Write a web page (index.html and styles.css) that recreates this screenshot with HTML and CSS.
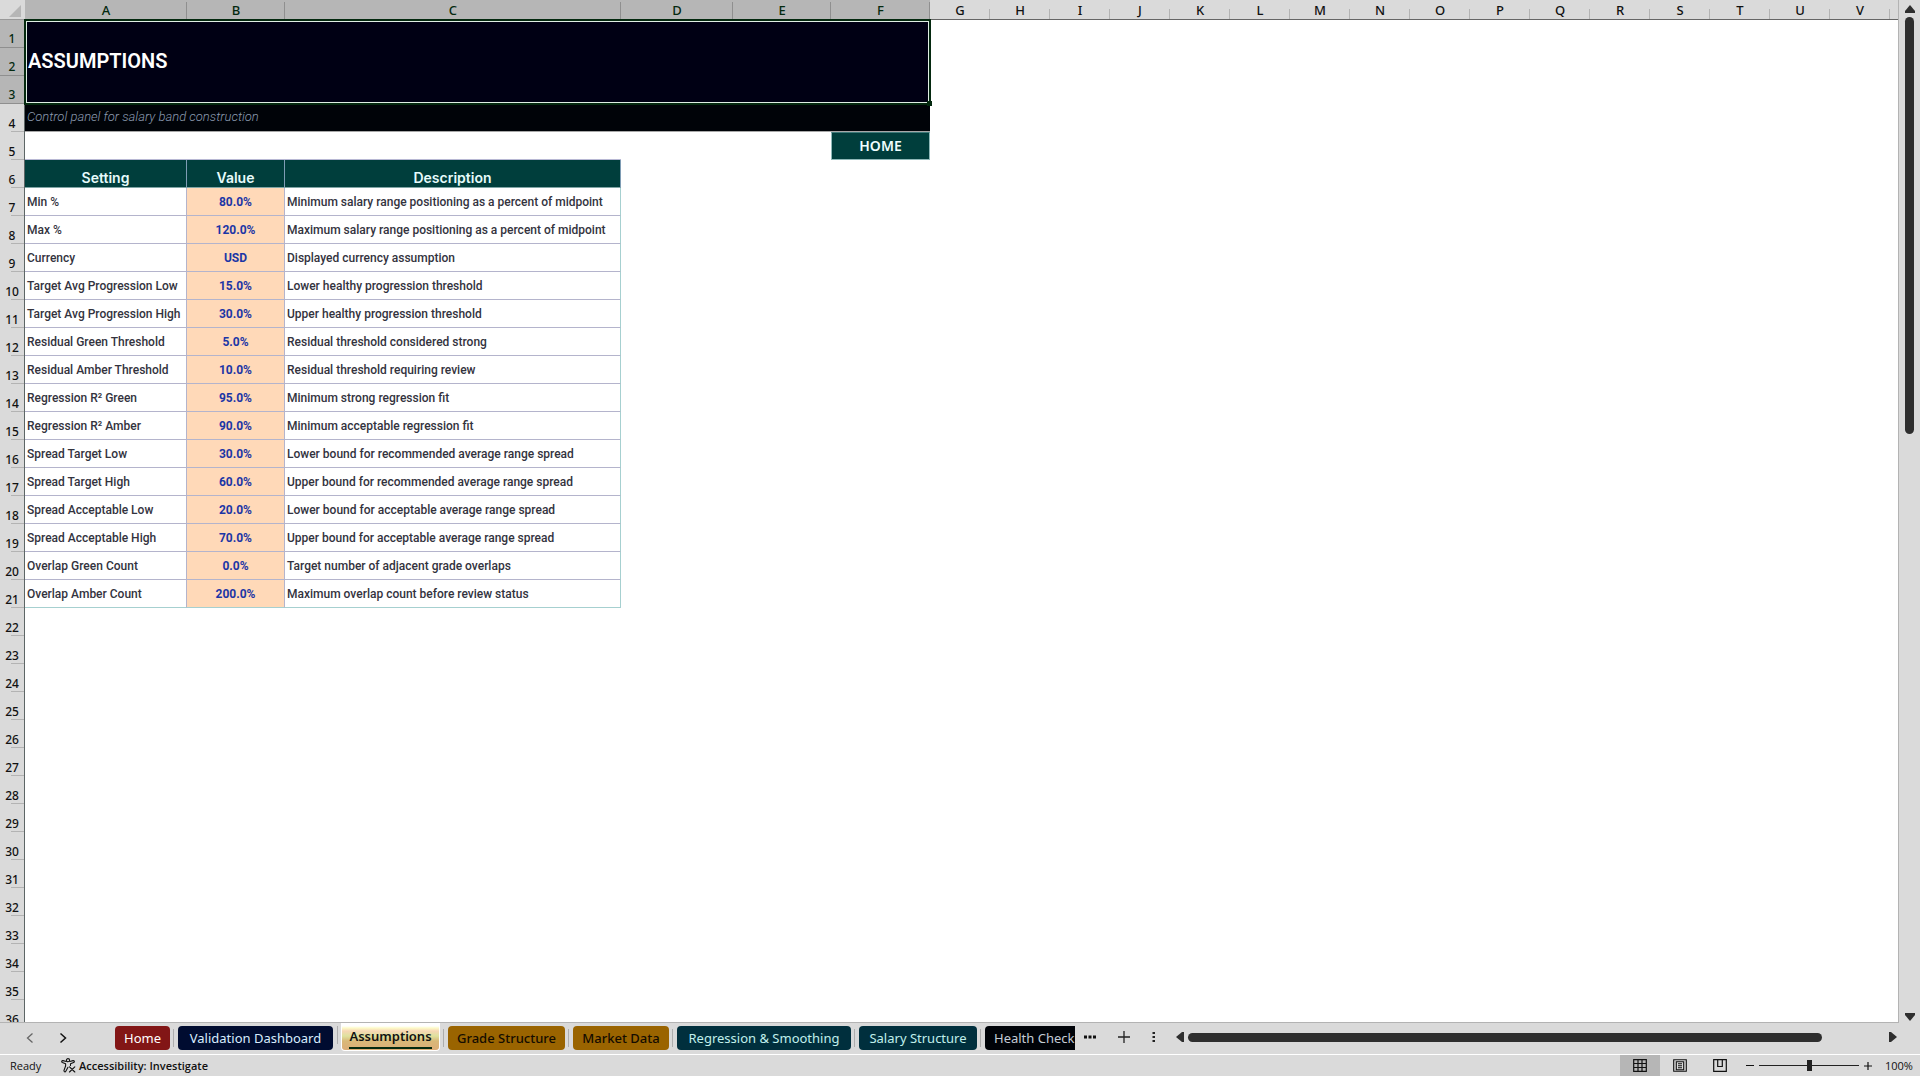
FILE: index.html
```html
<!DOCTYPE html>
<html lang="en">
<head>
<meta charset="utf-8">
<title>Assumptions</title>
<link rel="stylesheet" href="styles.css">
</head>
<body>
<main class="workspace">
  <div class="sheet">
    <table class="grid">
      <colgroup>
        <col class="w-head"><col class="w-a"><col class="w-b"><col class="w-c"><col class="w-d"><col class="w-e"><col class="w-f">
        <col class="w-std" span="16"><col>
      </colgroup>
      <thead>
        <tr>
          <th class="corner"><svg width="12" height="12" viewBox="0 0 12 12" aria-hidden="true"><path d="M12 0V12H0Z" fill="#b6b6b6"/></svg></th>
          <th class="sel">A</th><th class="sel">B</th><th class="sel">C</th><th class="sel">D</th><th class="sel">E</th><th class="sel">F</th>
          <th>G</th><th>H</th><th>I</th><th>J</th><th>K</th><th>L</th><th>M</th><th>N</th><th>O</th><th>P</th><th>Q</th><th>R</th><th>S</th><th>T</th><th>U</th><th>V</th><th class="rest"></th>
        </tr>
      </thead>
      <tbody>
        <tr><th class="sel">1</th><td class="title" colspan="6" rowspan="3">ASSUMPTIONS<span class="selection"></span></td></tr>
        <tr><th class="sel">2</th></tr>
        <tr><th class="sel">3</th></tr>
        <tr><th>4</th><td class="subtitle" colspan="6">Control panel for salary band construction</td></tr>
        <tr><th>5</th><td colspan="5"></td><td class="home"><a href="#home">HOME</a></td></tr>
        <tr class="heads"><th>6</th><td>Setting</td><td>Value</td><td>Description</td></tr>
        <tr class="item"><th>7</th><td>Min %</td><td>80.0%</td><td>Minimum salary range positioning as a percent of midpoint</td></tr>
        <tr class="item"><th>8</th><td>Max %</td><td>120.0%</td><td>Maximum salary range positioning as a percent of midpoint</td></tr>
        <tr class="item"><th>9</th><td>Currency</td><td>USD</td><td>Displayed currency assumption</td></tr>
        <tr class="item"><th>10</th><td>Target Avg Progression Low</td><td>15.0%</td><td>Lower healthy progression threshold</td></tr>
        <tr class="item"><th>11</th><td>Target Avg Progression High</td><td>30.0%</td><td>Upper healthy progression threshold</td></tr>
        <tr class="item"><th>12</th><td>Residual Green Threshold</td><td>5.0%</td><td>Residual threshold considered strong</td></tr>
        <tr class="item"><th>13</th><td>Residual Amber Threshold</td><td>10.0%</td><td>Residual threshold requiring review</td></tr>
        <tr class="item"><th>14</th><td>Regression R² Green</td><td>95.0%</td><td>Minimum strong regression fit</td></tr>
        <tr class="item"><th>15</th><td>Regression R² Amber</td><td>90.0%</td><td>Minimum acceptable regression fit</td></tr>
        <tr class="item"><th>16</th><td>Spread Target Low</td><td>30.0%</td><td>Lower bound for recommended average range spread</td></tr>
        <tr class="item"><th>17</th><td>Spread Target High</td><td>60.0%</td><td>Upper bound for recommended average range spread</td></tr>
        <tr class="item"><th>18</th><td>Spread Acceptable Low</td><td>20.0%</td><td>Lower bound for acceptable average range spread</td></tr>
        <tr class="item"><th>19</th><td>Spread Acceptable High</td><td>70.0%</td><td>Upper bound for acceptable average range spread</td></tr>
        <tr class="item"><th>20</th><td>Overlap Green Count</td><td>0.0%</td><td>Target number of adjacent grade overlaps</td></tr>
        <tr class="item last"><th>21</th><td>Overlap Amber Count</td><td>200.0%</td><td>Maximum overlap count before review status</td></tr>
        <tr><th>22</th></tr><tr><th>23</th></tr><tr><th>24</th></tr><tr><th>25</th></tr><tr><th>26</th></tr>
        <tr><th>27</th></tr><tr><th>28</th></tr><tr><th>29</th></tr><tr><th>30</th></tr><tr><th>31</th></tr>
        <tr><th>32</th></tr><tr><th>33</th></tr><tr><th>34</th></tr><tr><th>35</th></tr><tr><th>36</th></tr>
      </tbody>
    </table>
  </div>
  <div class="vscroll">
    <svg width="10" height="8" viewBox="0 0 10 8" aria-hidden="true"><path d="M5 0L10 6V8H0V6Z" fill="#2e2e2e"/></svg>
    <div class="vtrack"><div class="vthumb"></div></div>
    <svg width="10" height="8" viewBox="0 0 10 8" aria-hidden="true"><path d="M5 8L10 2V0H0V2Z" fill="#2e2e2e"/></svg>
  </div>
</main>

<nav class="tabbar">
  <div class="arrows">
    <button aria-label="Previous sheet"><svg width="8" height="12" viewBox="0 0 8 12"><path d="M6.5 1.5L1.5 6L6.5 10.5" fill="none" stroke="#666" stroke-width="1.3"/></svg></button>
    <button aria-label="Next sheet"><svg width="8" height="12" viewBox="0 0 8 12"><path d="M1.5 1.5L6.5 6L1.5 10.5" fill="none" stroke="#111" stroke-width="1.5"/></svg></button>
  </div>
  <div class="tabs">
    <button class="tab red">Home</button>
    <button class="tab navy">Validation Dashboard</button>
    <button class="tab active"><span>Assumptions</span></button>
    <button class="tab gold">Grade Structure</button>
    <button class="tab gold market">Market Data</button>
    <button class="tab teal regression">Regression &amp; Smoothing</button>
    <button class="tab teal">Salary Structure</button>
    <button class="tab black">Health Check</button>
  </div>
  <div class="tools">
    <button aria-label="More sheets"><svg width="12" height="4" viewBox="0 0 12 4"><path d="M0 .5h3v3H0zM4.5 .5h3v3h-3zM9 .5h3v3H9z" fill="#111"/></svg></button>
    <button aria-label="New sheet"><svg width="12" height="12" viewBox="0 0 12 12"><path d="M6 0V12M0 6H12" stroke="#222" stroke-width="1.3"/></svg></button>
    <button aria-label="Resize tab bar"><svg width="4" height="12" viewBox="0 0 4 12"><path d="M.5 1h2.5v2H.5zM.5 5h2.5v2H.5zM.5 9h2.5v2H.5z" fill="#222"/></svg></button>
  </div>
  <div class="hscroll">
    <svg width="8" height="10" viewBox="0 0 8 10" aria-hidden="true"><path d="M0 5L6 0H8V10H6Z" fill="#2e2e2e"/></svg>
    <div class="htrack"><div class="hthumb"></div></div>
    <svg width="8" height="10" viewBox="0 0 8 10" aria-hidden="true"><path d="M8 5L2 0H0V10H2Z" fill="#2e2e2e"/></svg>
  </div>
</nav>

<footer class="status">
  <span class="ready">Ready</span>
  <button class="access">
    <svg width="15" height="15" viewBox="0 0 15 15" fill="none" stroke="#111" stroke-width="1.1" stroke-linecap="round" stroke-linejoin="round" aria-hidden="true"><circle cx="7" cy="2.2" r="1.6"/><path d="M5.3 3.5L2 2.6C.6 2.4.3 4 1.4 4.5L4.6 5.8V8L3 12.4C2.7 13.8 4.2 14.3 4.8 13.2L7 9.3M8.8 3.5L12 2.6C13.5 2.4 13.8 4 12.6 4.5L9.5 5.8V7.4M8.5 8.8L13.8 14M13.8 8.8L8.5 14"/></svg>
    Accessibility: Investigate
  </button>
  <div class="views">
    <button class="on" aria-label="Normal"><svg width="14" height="14" viewBox="0 0 14 14"><path d="M.7 .7H13.3V12.3H.7ZM5 .7V12.3M9 .7V12.3M.7 4.5H13.3M.7 8.5H13.3" fill="none" stroke="#111" stroke-width="1.2"/></svg></button>
    <button aria-label="Page Layout"><svg width="14" height="14" viewBox="0 0 14 14"><path d="M.7 .7H13.3V12.3H.7ZM3.3 2.7H10.7V10.7H3.3ZM5 4.7H9M5 6.7H9M5 8.7H9" fill="none" stroke="#111" stroke-width="1.1"/></svg></button>
    <button aria-label="Page Break Preview"><svg width="14" height="14" viewBox="0 0 14 14"><path d="M.7 .7H13.3V12.3H.7ZM4.7 .7V7.5H9.3V.7" fill="none" stroke="#111" stroke-width="1.2"/></svg></button>
  </div>
  <div class="zoom">
    <button aria-label="Zoom out"><svg width="8" height="8" viewBox="0 0 8 8"><path d="M0 3.5H8" stroke="#111"/></svg></button>
    <input type="range" min="0" max="100" value="50" aria-label="Zoom">
    <button aria-label="Zoom in"><svg width="8" height="8" viewBox="0 0 8 8"><path d="M0 4H8M4 0V8" stroke="#111" stroke-width="1.2"/></svg></button>
  </div>
  <span class="percent">100%</span>
</footer>
</body>
</html>
```
FILE: styles.css
```css
* { box-sizing: border-box; }

body {
  margin: 0;
  height: 100vh;
  display: flex;
  flex-direction: column;
  overflow: hidden;
  background: #dadada;
  color: #111;
  font-family: "Noto Sans", "Open Sans", sans-serif;
  font-size: 13px;
}

button {
  margin: 0;
  padding: 0;
  border: 0;
  background: none;
  color: inherit;
  font: inherit;
  display: flex;
  align-items: center;
  justify-content: center;
}

svg { display: block; flex: none; }

/* Sheet */
.workspace { flex: 1; min-height: 0; display: flex; }

.sheet {
  flex: 1;
  min-width: 0;
  overflow: hidden;
  background: #fff;
  border-right: 1px solid #b3b3b3;
  border-bottom: 1px solid #b3b3b3;
}

.grid {
  width: 100%;
  table-layout: fixed;
  border-collapse: separate;
  border-spacing: 0;
}

.w-head { width: 25px; }
.w-a { width: 162px; }
.w-b { width: 98px; }
.w-c { width: 336px; }
.w-d { width: 112px; }
.w-e { width: 98px; }
.w-f { width: 99px; }
.w-std { width: 60px; }

.grid th, .grid td { padding: 0; white-space: nowrap; }

.grid thead th {
  height: 20px;
  padding-top: 1px;
  border-bottom: 1px solid #666;
  background: linear-gradient(#b3b3b3, #b3b3b3) right bottom / 1px 10px no-repeat #dadada;
  font-weight: 500;
  font-size: 13px;
  line-height: 18px;
}
.grid thead th.sel {
  background: linear-gradient(#8f8f8f, #8f8f8f) right bottom / 1px 17px no-repeat #b6b6b6;
  border-bottom-color: #04290f;
  color: #04290f;
}
.grid thead th.rest { background: #dadada; }
.grid thead th.corner { border-bottom-color: #999; background: #dadada; }
.corner svg { margin: 2px 0 0 9px; }

tbody tr { height: 28px; }
tbody th {
  height: 28px;
  border-right: 1px solid #5d6666;
  background: linear-gradient(#b3b3b3, #b3b3b3) right bottom / 13px 1px no-repeat #dadada;
  font-weight: 500;
  font-size: 12px;
  line-height: 16px;
  vertical-align: bottom;
}
tbody th.sel {
  border-bottom: 1px solid #8f8f8f;
  background: #b6b6b6;
  color: #04290f;
}

td { font-family: Roboto, "Liberation Sans", sans-serif; }

.grid .title {
  position: relative;
  padding: 0 0 2px 3px;
  background: #000014;
  color: #fff;
  font-size: 20px;
  font-weight: 600;
}
.selection {
  position: absolute;
  inset: -1px;
  border: 2px solid #04290f;
  box-shadow: inset 0 0 0 1px #dfeee4;
}
.selection::after {
  content: "";
  position: absolute;
  right: -3px;
  bottom: -3px;
  width: 5px;
  height: 5px;
  background: #04290f;
}

.grid .subtitle {
  padding: 0 0 2px 2px;
  border-bottom: 1px solid #a8a8a8;
  background: #000308;
  color: #8c9bb0;
  font-size: 13px;
  font-style: italic;
  font-weight: 300;
}

.home {
  border: 1px solid #8fb8b8;
  border-top-color: #3f7a7a;
  background: #003e3c;
  text-align: center;
}
.home a {
  color: #f0ffff;
  font-family: "Noto Sans", sans-serif;
  font-size: 14px;
  font-weight: 600;
  line-height: 20px;
  text-decoration: none;
}

.heads td {
  border-right: 1px solid #7e9cb4;
  border-bottom: 1px solid #7fa5a5;
  background: #003e3c;
  box-shadow: 0 -1px #b8b8d4;
  color: #e6fbfb;
  font-family: Inter, sans-serif;
  font-size: 14px;
  font-weight: 600;
  line-height: 18px;
  text-align: center;
  vertical-align: bottom;
}

.grid .item td {
  padding: 1px 0 0 2px;
  border-right: 1px solid #b4b4cc;
  border-bottom: 1px solid #b4b4cc;
  color: #33333e;
  font-size: 12px;
  font-weight: 500;
}
.grid .item td:nth-child(3) {
  padding-left: 0;
  background: #ffd9b8;
  color: #1c36a6;
  font-weight: 700;
  text-align: center;
}
.item td:nth-child(4) { border-right-color: #a6d0d0; }
.grid .last td { border-bottom-color: #a6d0d0; }

/* Vertical scroll bar */
.vscroll {
  width: 21px;
  display: flex;
  flex-direction: column;
  align-items: center;
  gap: 4px;
  padding: 5px 0 2px;
}
.vtrack { flex: 1; width: 9px; }
.vthumb { height: 42%; border-radius: 5px; background: #2e2e2e; }

/* Tab bar */
.tabbar {
  height: 32px;
  display: flex;
  border-bottom: 1px solid #fff;
}
.arrows {
  width: 115px;
  padding: 0 0 2px 26px;
  display: flex;
  align-items: center;
  gap: 25px;
}
.tabs {
  width: 960px;
  display: flex;
  gap: 8px;
  overflow: hidden;
}
.tab {
  position: relative;
  flex: none;
  height: 24px;
  margin-top: 3px;
  padding: 0 9px;
  border-radius: 4px;
  font-size: 13px;
  line-height: 24px;
  white-space: nowrap;
}
.tab + .tab::before {
  content: "";
  position: absolute;
  left: -5px;
  top: 3px;
  width: 1px;
  height: 18px;
  background: #adadad;
}
.red { background: #821616; color: #fff; width: 55px; }
.navy { background: #000c30; color: #d8ecff; width: 155px; }
.gold { background: #9a6400; color: #140c00; width: 117px; font-weight: 500; }
.market { width: 96px; }
.teal { background: #002f3d; color: #c0f0ec; width: 118px; }
.regression { width: 174px; }
.black { background: #000308; color: #c4ccd6; }
.active {
  width: 99px;
  height: 28px;
  margin-top: 0;
  border: 1px solid #fff;
  border-top: 0;
  border-radius: 0 0 4px 4px;
  background: linear-gradient(#fff 3px, #fdfbc8 5px, #f6d6b4 8px, #dfe29e 13px, #d9b878 18px, #dcae78);
  font-weight: 600;
  line-height: 22px;
}
.active span {
  height: 24px;
  border-bottom: 2px solid #04290f;
}

.tools {
  display: flex;
  align-items: center;
  gap: 22px;
  padding: 0 0 3px 9px;
}
.hscroll {
  flex: 1;
  display: flex;
  align-items: center;
  gap: 4px;
  padding: 0 23px 3px 20px;
}
.htrack { flex: 1; }
.hthumb { width: 91%; height: 9px; border-radius: 5px; background: #2e2e2e; }

/* Status bar */
.status {
  height: 21px;
  display: flex;
  align-items: center;
  font-family: "Open Sans", sans-serif;
  font-size: 11px;
}
.ready { width: 61px; padding-left: 10px; }
.access { gap: 3px; font-weight: 600; white-space: nowrap; }
.views { margin-left: auto; display: flex; height: 100%; }
.views button { width: 40px; height: 100%; }
.views .on { background: #b6b6b6; }
.zoom { display: flex; align-items: center; gap: 5px; padding-left: 6px; }
.zoom input {
  -webkit-appearance: none;
  appearance: none;
  width: 100px;
  height: 12px;
  margin: 0;
  background: linear-gradient(#222, #222) center / 100% 1px no-repeat;
}
.zoom input::-webkit-slider-thumb {
  -webkit-appearance: none;
  width: 5px;
  height: 11px;
  background: #222;
}
.percent { width: 48px; padding-left: 13px; }
```
